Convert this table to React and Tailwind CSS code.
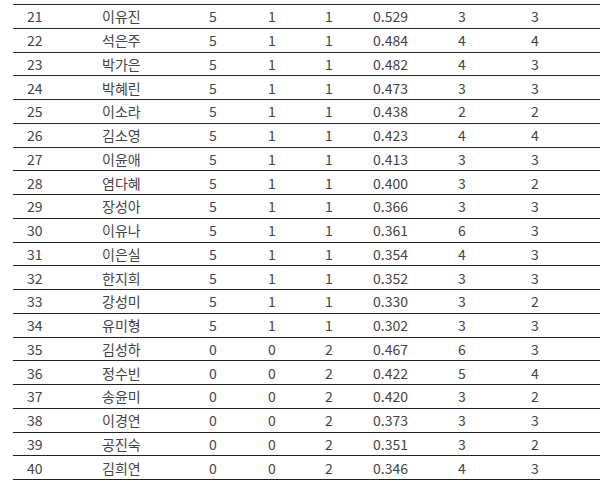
import React from 'react'

const rows = [
  ['21', '이유진', '5', '1', '1', '0.529', '3', '3'],
  ['22', '석은주', '5', '1', '1', '0.484', '4', '4'],
  ['23', '박가은', '5', '1', '1', '0.482', '4', '3'],
  ['24', '박혜린', '5', '1', '1', '0.473', '3', '3'],
  ['25', '이소라', '5', '1', '1', '0.438', '2', '2'],
  ['26', '김소영', '5', '1', '1', '0.423', '4', '4'],
  ['27', '이윤애', '5', '1', '1', '0.413', '3', '3'],
  ['28', '염다혜', '5', '1', '1', '0.400', '3', '2'],
  ['29', '장성아', '5', '1', '1', '0.366', '3', '3'],
  ['30', '이유나', '5', '1', '1', '0.361', '6', '3'],
  ['31', '이은실', '5', '1', '1', '0.354', '4', '3'],
  ['32', '한지희', '5', '1', '1', '0.352', '3', '3'],
  ['33', '강성미', '5', '1', '1', '0.330', '3', '2'],
  ['34', '유미형', '5', '1', '1', '0.302', '3', '3'],
  ['35', '김성하', '0', '0', '2', '0.467', '6', '3'],
  ['36', '정수빈', '0', '0', '2', '0.422', '5', '4'],
  ['37', '송윤미', '0', '0', '2', '0.420', '3', '2'],
  ['38', '이경연', '0', '0', '2', '0.373', '3', '3'],
  ['39', '공진숙', '0', '0', '2', '0.351', '3', '2'],
  ['40', '김희연', '0', '0', '2', '0.346', '4', '3'],
]

const App = () => {
  return (
    <div className="bg-white w-[600px] h-[487px] overflow-hidden pt-[4px] text-[14px] text-[#444] font-['Noto_Sans_CJK_KR','Noto_Sans',sans-serif]">
      <div className="ml-[13px] w-[587px] border-t-[1.5px] border-[#222]">
        {rows.map((r) => (
          <div
            key={r[0]}
            className="grid grid-cols-[75px_107px_59px_57px_48px_85px_73px_1fr] pl-[14px] h-[23.75px] items-center border-b-[1.5px] border-[#222] leading-none"
          >
            {r.map((c, i) => (
              <span key={i}>{c}</span>
            ))}
          </div>
        ))}
      </div>
    </div>
  )
}

export default App
